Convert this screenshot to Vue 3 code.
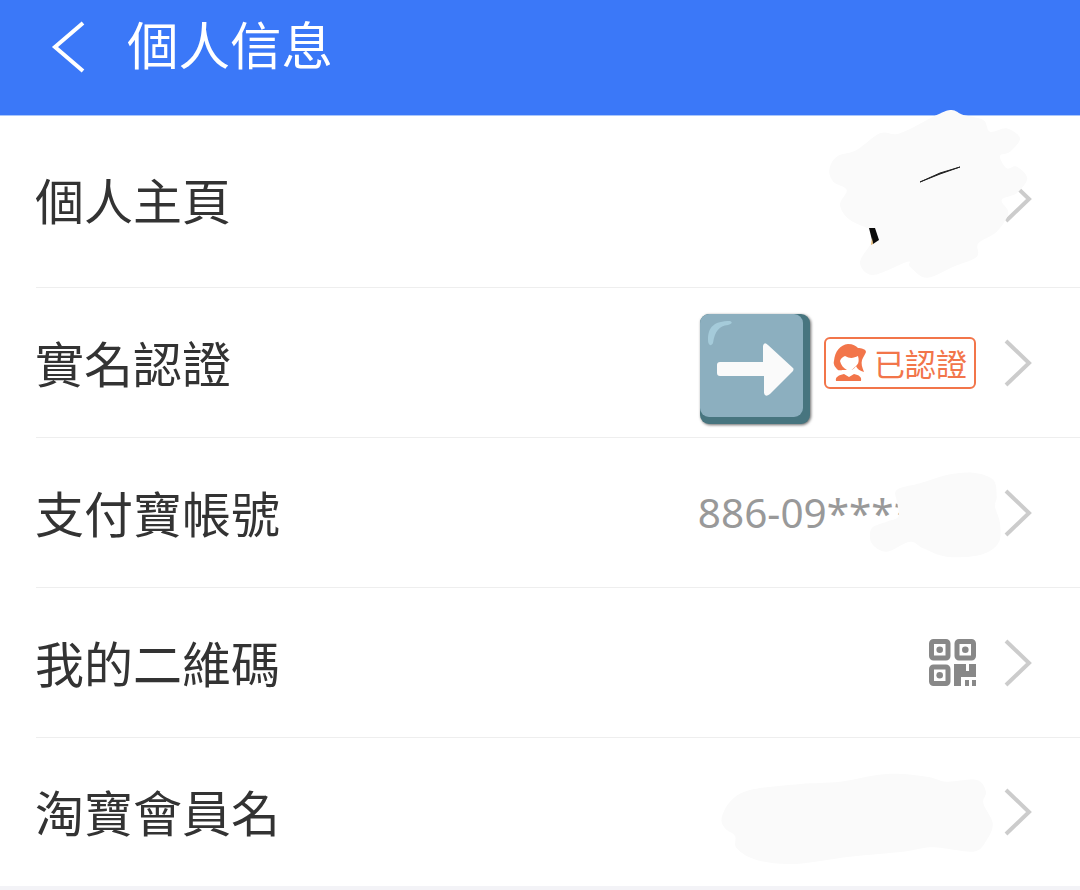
<script setup>
const toPage = (pts, ox, oy) => pts.map(([x, y]) => [ox + x / 3, oy + y / 3])

const smooth = (p) => {
  const n = p.length
  let d = `M${p[0][0].toFixed(1)} ${p[0][1].toFixed(1)}`
  for (let i = 0; i < n; i++) {
    const a = p[(i - 1 + n) % n], b = p[i], c = p[(i + 1) % n], e = p[(i + 2) % n]
    const c1 = [b[0] + (c[0] - a[0]) / 6, b[1] + (c[1] - a[1]) / 6]
    const c2 = [c[0] - (e[0] - b[0]) / 6, c[1] - (e[1] - b[1]) / 6]
    d += `C${c1[0].toFixed(1)} ${c1[1].toFixed(1)} ${c2[0].toFixed(1)} ${c2[1].toFixed(1)} ${c[0].toFixed(1)} ${c[1].toFixed(1)}`
  }
  return d + 'Z'
}

const blobs = [
  toPage([[395,30],[430,45],[490,60],[510,95],[560,85],[600,115],[570,155],[540,168],[560,205],[590,200],[622,235],[590,280],[545,300],[565,340],[530,395],[475,430],[470,470],[400,500],[320,533],[270,500],[262,485],[160,525],[120,490],[150,435],[170,400],[90,360],[60,315],[80,270],[40,245],[28,210],[50,170],[110,150],[180,100],[240,100],[350,45]], 820, 100),
  toPage([[650,90],[720,70],[800,45],[880,38],[940,60],[950,110],[945,140],[960,190],[955,250],[900,285],[800,290],[730,265],[690,245],[620,275],[575,250],[575,205],[620,185],[655,170],[652,130]], 680, 460),
  toPage([[65,175],[90,125],[150,90],[300,72],[420,65],[560,42],[680,50],[740,65],[830,60],[858,95],[850,130],[878,190],[860,240],[820,275],[700,262],[610,275],[450,290],[280,312],[170,300],[110,265],[105,228],[75,205]], 700, 760)
].map(smooth)
</script>

<template>
  <div class="page">
    <header class="bar">
      <svg class="back" viewBox="0 0 36 56" width="36" height="56">
        <path d="M33 5 L5 29 L33 53" />
      </svg>
      <h1 class="title">個人信息</h1>
    </header>

    <ul class="list">
      <li class="row first">
        <span class="label">個人主頁</span>
        <svg class="chev" viewBox="0 0 28 48" width="28" height="48"><path d="M2 2 L25 24 L2 46" /></svg>
      </li>

      <li class="row">
        <span class="label">實名認證</span>
        <div class="right">
          <svg class="emoji" viewBox="0 0 110 110" width="110" height="110">
            <rect x="0" y="0" width="110" height="110" rx="9" fill="#47757f" />
            <rect x="0" y="0" width="103" height="103" rx="9" fill="#8cafbf" />
            <path d="M8 26 C8 13 14 7 30 7 C33 8 32 10 28 11 C19 12 15 17 13 29 C11 33 8 31 8 26Z" fill="#a5cbda" />
            <path d="M20 48 H63 V32 Q64 27 68 31 L93 54 Q94 55 93 57 L70 80 Q65 84 64 79 V62 H20 Q17 62 17 59 V51 Q17 48 20 48Z" fill="#fafafa" />
          </svg>
          <div class="badge">
            <svg class="girl" viewBox="7 7 34 37" width="34" height="37">
              <path d="M8 24 C9 14 14 8 22 7 C27 7 30 9 32 11 C35 11 40 12 40 15 C39 18 37 20 36 23 C35 27 36 30 38 35 C34 34 31 32 30 29 C28 32 26 33 24 33 L18 33 C14 33 12 34 11 32 C9 30 7 27 8 24Z" fill="#f2754a" />
              <path d="M14 24 C15 21 17 20 19 19 C24 22 28 21 32 19 C33 22 33 26 31 28 C28 31 26 33 24 34 V37 H21 V33 C17 31 15 28 14 24Z" fill="#fff" />
              <path d="M10 44 C9 40 13 38 18 37 L23 40 L28 37 C33 38 36 40 35 44Z" fill="#f2754a" />
            </svg>
            <span class="badge-text">已認證</span>
          </div>
          <svg class="chev" viewBox="0 0 28 48" width="28" height="48"><path d="M2 2 L25 24 L2 46" /></svg>
        </div>
      </li>

      <li class="row">
        <span class="label">支付寶帳號</span>
        <div class="right">
          <span class="phone">886-09****</span>
          <svg class="chev" viewBox="0 0 28 48" width="28" height="48"><path d="M2 2 L25 24 L2 46" /></svg>
        </div>
      </li>

      <li class="row">
        <span class="label">我的二維碼</span>
        <div class="right">
          <svg class="qr" viewBox="0 0 47 47" width="47" height="47">
            <g fill="none" stroke="#888" stroke-width="5">
              <rect x="2.5" y="2.5" width="16.5" height="16.5" rx="2" />
              <rect x="28" y="2.5" width="16.5" height="16.5" rx="2" />
              <rect x="2.5" y="28" width="16.5" height="16.5" rx="2" />
            </g>
            <g fill="#888">
              <circle cx="10.7" cy="10.7" r="3.3" />
              <circle cx="36.3" cy="10.7" r="3.3" />
              <circle cx="10.7" cy="36.3" r="3.3" />
              <path d="M25 25 H37 V32 H40 V25 H47 V38 H32 V47 H25Z" />
              <rect x="36" y="41" width="4" height="6" />
              <rect x="43" y="41" width="4" height="6" />
            </g>
          </svg>
          <svg class="chev" viewBox="0 0 28 48" width="28" height="48"><path d="M2 2 L25 24 L2 46" /></svg>
        </div>
      </li>

      <li class="row">
        <span class="label">淘寶會員名</span>
        <svg class="chev" viewBox="0 0 28 48" width="28" height="48"><path d="M2 2 L25 24 L2 46" /></svg>
      </li>
    </ul>

    <svg class="scribble" viewBox="0 0 1080 890" width="1080" height="890">
      <path v-for="(d, i) in blobs" :key="i" :d="d" fill="#fafafa" />
      <path d="M920 182 L940 174 L960 167 L940 173Z" fill="#111" stroke="#222" stroke-width="1" />
      <path d="M869 228 H875 L879 240 L873 244Z" fill="#0a0a0a" />
      <path d="M872 238 L873 244 L871 245Z" fill="#e2b46a" />
    </svg>
  </div>
</template>

<style>
html, body { margin: 0; background: #fff; }
</style>

<style scoped>
.page {
  position: relative;
  width: 1080px;
  height: 890px;
  overflow: hidden;
  background: #fff;
  font-family: "Noto Sans CJK TC", "Noto Sans", sans-serif;
}
.bar {
  box-sizing: border-box;
  height: 116px;
  padding: 0 0 24px 50px;
  display: flex;
  align-items: center;
  gap: 41px;
  background: #3b78f8;
  border-bottom: 1px solid #a9c6fb;
}
.back path {
  fill: none;
  stroke: #fff;
  stroke-width: 4;
}
.title {
  margin: 0 0 6px;
  font-size: 51.5px;
  font-weight: 400;
  line-height: 60px;
  color: #fff;
}
.list {
  margin: 0;
  padding: 0 0 0 36px;
  list-style: none;
  border-bottom: 4px solid #f3f3f7;
}
.row {
  box-sizing: border-box;
  height: 150px;
  padding-right: 48px;
  display: flex;
  align-items: center;
  justify-content: space-between;
  border-bottom: 1px solid #eeeeee;
}
.row.first { height: 172px; }
.row.first .label { margin-bottom: 6px; }
.row.first .chev { margin-bottom: 5px; }
.row:last-child { border-bottom: 0; height: 148px; }
.label {
  margin-left: -1px;
  margin-bottom: 2px;
  font-size: 49px;
  line-height: 60px;
  color: #333;
}
.right {
  display: flex;
  align-items: center;
}
.chev { flex: none; }
.chev path {
  fill: none;
  stroke: #cccccc;
  stroke-width: 4;
}
.emoji {
  flex: none;
  margin: 12px 14px 0 0;
  overflow: visible;
  filter: drop-shadow(1px 1px 1.5px rgba(0, 0, 0, 0.6));
}
.badge {
  box-sizing: border-box;
  width: 152px;
  height: 52px;
  margin: 0 28px 0 0;
  padding-left: 7px;
  display: flex;
  align-items: center;
  gap: 7px;
  border: 2px solid #f2754a;
  border-radius: 6px;
}
.girl { flex: none; }
.badge-text {
  font-size: 31px;
  line-height: 40px;
  color: #f2754a;
  white-space: nowrap;
}
.phone {
  margin-right: 88px;
  font-family: "Noto Sans", sans-serif;
  font-size: 40.5px;
  line-height: 56px;
  color: #999;
}
.qr {
  flex: none;
  margin-right: 28px;
}
.scribble {
  position: absolute;
  left: 0;
  top: 0;
  pointer-events: none;
}
</style>
